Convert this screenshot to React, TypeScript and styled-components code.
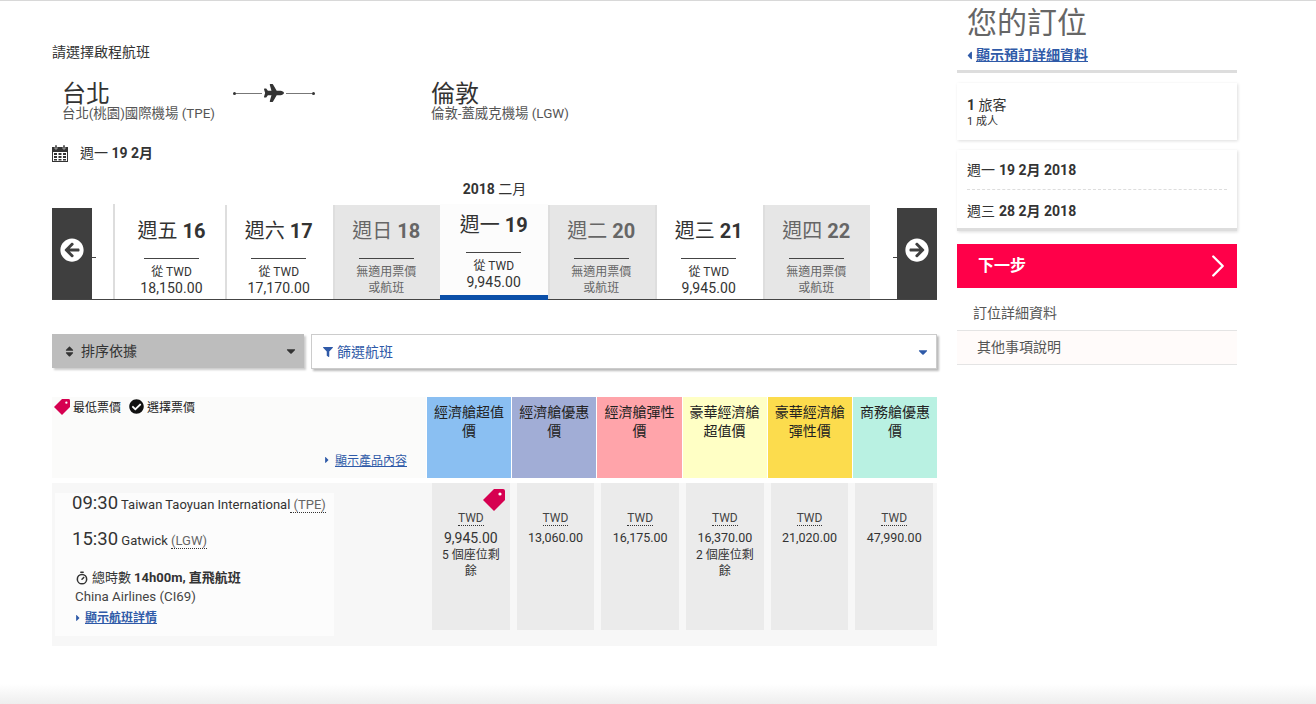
import styled, { createGlobalStyle } from "styled-components";
import { FaArrowCircleLeft, FaArrowCircleRight, FaCaretDown, FaCaretLeft, FaCaretRight, FaCheckCircle, FaFilter, FaPlane, FaSort } from "react-icons/fa";
import { Timer, ChevronRight } from "lucide-react";

const FONT = `Roboto, "Noto Sans CJK TC", sans-serif`;
const BLUE = "#2f5aa8";

const days = [
    { day: "週五", num: 16, price: "18,150.00" },
    { day: "週六", num: 17, price: "17,170.00" },
    { day: "週日", num: 18 },
    { day: "週一", num: 19, price: "9,945.00", active: true },
    { day: "週二", num: 20 },
    { day: "週三", num: 21, price: "9,945.00" },
    { day: "週四", num: 22 },
];

const fares = [
    { name: "經濟艙超值價", color: "#8abff2" },
    { name: "經濟艙優惠價", color: "#a1add6" },
    { name: "經濟艙彈性價", color: "#ffa4aa" },
    { name: "豪華經濟艙超值價", color: "#ffffc5" },
    { name: "豪華經濟艙彈性價", color: "#fcdc4d" },
    { name: "商務艙優惠價", color: "#b9f1e2" },
];

const prices = [
    { price: "9,945.00", seats: "5 個座位剩餘", lowest: true },
    { price: "13,060.00" },
    { price: "16,175.00" },
    { price: "16,370.00", seats: "2 個座位剩餘" },
    { price: "21,020.00" },
    { price: "47,990.00" },
];

const TagIcon = ({ size }: { size: number }) => (
    <svg width={size} height={size} viewBox="0 0 22 22">
        <path d="M0 11 11 0h9a2 2 0 0 1 2 2v9L11 22Z" fill="#d60050" />
        <circle cx="17" cy="5" r="1.6" fill="#fff" />
    </svg>
);

const CalendarIcon = () => (
    <svg width="16" height="18" viewBox="0 0 16 18" fill="#333">
        <path d="M0 3h16v15H0Zm1 5v9h14V8Z" fillRule="evenodd" />
        <path d="M3 1h2v4H3zM11 1h2v4h-2z" stroke="#fff" strokeWidth=".5" />
        <path d="M2 9h3v2H2zM6.5 9h3v2h-3zM11 9h3v2h-3zM2 12h3v2H2zM6.5 12h3v2h-3zM11 12h3v2h-3zM2 15h3v1.5H2zM6.5 15h3v1.5h-3zM11 15h3v1.5h-3z" />
    </svg>
);

export default function App() {
    return (
        <>
            <GlobalStyle />
            <Page>
                <MainColumn>
                    <Prompt>請選擇啟程航班</Prompt>
                    <Route>
                        <Place>
                            <City>台北</City>
                            <Airport>台北(桃園)國際機場 (TPE)</Airport>
                        </Place>
                        <PlaneLine>
                            <Dot /><Line /><FaPlane size={20} /><Line /><Dot />
                        </PlaneLine>
                        <Place>
                            <City>倫敦</City>
                            <Airport>倫敦-蓋威克機場 (LGW)</Airport>
                        </Place>
                    </Route>
                    <DateRow>
                        <CalendarIcon />
                        <span>週一 <b>19 2月</b></span>
                    </DateRow>
                    <MonthLabel><b>2018</b> 二月</MonthLabel>

                    <Strip>
                        <ArrowBox><FaArrowCircleLeft size={24} /></ArrowBox>
                        <EdgeCell $side="left"><EdgeDash /></EdgeCell>
                        {days.map(d => (
                            <DayCell key={d.num} $active={d.active} $empty={!d.price}>
                                <DayTitle>{d.day} <b>{d.num}</b></DayTitle>
                                <DayRule />
                                {d.price ? (
                                    <>
                                        <DayFrom>從 TWD</DayFrom>
                                        <DayPrice>{d.price}</DayPrice>
                                    </>
                                ) : (
                                    <DayNone>無適用票價<br />或航班</DayNone>
                                )}
                            </DayCell>
                        ))}
                        <EdgeCell $side="right"><EdgeDash /></EdgeCell>
                        <ArrowBox><FaArrowCircleRight size={24} /></ArrowBox>
                    </Strip>

                    <Controls>
                        <SortSelect>
                            <FaSort size={13} />
                            <SelectLabel>排序依據</SelectLabel>
                            <SelectCaret><FaCaretDown size={14} /></SelectCaret>
                        </SortSelect>
                        <FilterSelect>
                            <FaFilter size={10} />
                            <SelectLabel>篩選航班</SelectLabel>
                            <SelectCaret><FaCaretDown size={14} /></SelectCaret>
                        </FilterSelect>
                    </Controls>

                    <FareHeader>
                        <Legend>
                            <LegendRow>
                                <TagIcon size={16} />
                                <span>最低票價</span>
                                <FaCheckCircle size={15} color="#111" />
                                <span>選擇票價</span>
                            </LegendRow>
                            <ProductLink><FaCaretRight size={10} /><a>顯示產品內容</a></ProductLink>
                        </Legend>
                        {fares.map(f => (
                            <FareName key={f.name} $color={f.color}>{f.name}</FareName>
                        ))}
                    </FareHeader>

                    <FlightRow>
                        <FlightCard>
                            <TimeRow><Time>09:30</Time> Taiwan Taoyuan International<Abbr> (TPE)</Abbr></TimeRow>
                            <TimeRow><Time>15:30</Time> Gatwick <Abbr>(LGW)</Abbr></TimeRow>
                            <Duration><Timer size={14} strokeWidth={2.6} />總時數 <b>14h00m, 直飛航班</b></Duration>
                            <Carrier>China Airlines (CI69)</Carrier>
                            <DetailLink><FaCaretRight size={10} /><a>顯示航班詳情</a></DetailLink>
                        </FlightCard>
                        <PriceCells>
                            {prices.map(p => (
                                <PriceCell key={p.price}>
                                    {p.lowest && <CornerTag><TagIcon size={22} /></CornerTag>}
                                    <Currency>TWD</Currency>
                                    <PriceValue $big={p.lowest}>{p.price}</PriceValue>
                                    {p.seats && <Seats>{p.seats}</Seats>}
                                </PriceCell>
                            ))}
                        </PriceCells>
                    </FlightRow>
                </MainColumn>

                <SideColumn>
                    <SideTitle>您的訂位</SideTitle>
                    <SideLink><FaCaretLeft size={13} /><a>顯示預訂詳細資料</a></SideLink>
                    <SideCard>
                        <Travelers><b>1</b> 旅客</Travelers>
                        <Adults>1 成人</Adults>
                    </SideCard>
                    <DatesCard>
                        <TripDate>週一 <b>19 2月 2018</b></TripDate>
                        <TripDate>週三 <b>28 2月 2018</b></TripDate>
                    </DatesCard>
                    <NextButton>
                        <NextLabel>下一步</NextLabel>
                        <ChevronRight size={38} strokeWidth={1.5} />
                    </NextButton>
                    <SideMenuItem>訂位詳細資料</SideMenuItem>
                    <SideMenuItem $alt>其他事項說明</SideMenuItem>
                </SideColumn>
            </Page>
            <BottomFade />
        </>
    );
}

const GlobalStyle = createGlobalStyle`
    html, body {
        margin: 0;
        height: 100%;
        overflow: hidden;
        background: #fff;
    }
    body {
        font-family: ${FONT};
        color: #333;
    }
    a {
        color: ${BLUE};
        text-decoration: underline;
    }
`;

const Page = styled.div`
    display: flex;
    gap: 20px;
    height: 684px;
    padding-left: 52px;
    border-top: 1px solid #d8d8d8;
    box-sizing: border-box;
`;

const BottomFade = styled.div`
    height: 20px;
    background: linear-gradient(#fff, #eee);
`;

const MainColumn = styled.div`
    width: 885px;
    padding-top: 43px;
`;

const Prompt = styled.div`
    font-size: 14px;
    line-height: 16px;
`;

const Route = styled.div`
    display: flex;
    margin-top: 20px;
    padding-left: 10px;
`;

const Place = styled.div`
    width: 170px;
`;

const City = styled.div`
    font-size: 24px;
    line-height: 28px;
    color: #333;
`;

const Airport = styled.div`
    font-size: 13.4px;
    line-height: 14px;
    margin-top: -1px;
    color: #555;
    white-space: nowrap;
`;

const PlaneLine = styled.div`
    display: flex;
    align-items: center;
    width: 82px;
    height: 20px;
    margin: 3px 116px 0 1px;
    color: #333;
    svg {
        margin: 0 2px;
        flex: none;
    }
`;

const Dot = styled.i`
    width: 3px;
    height: 3px;
    border-radius: 50%;
    background: #333;
    flex: none;
`;

const Line = styled.i`
    flex: 1;
    height: 1px;
    background: #777;
`;

const DateRow = styled.div`
    display: flex;
    align-items: center;
    gap: 12px;
    margin-top: 23px;
    font-size: 14px;
    line-height: 18px;
`;

const MonthLabel = styled.div`
    margin-top: 19px;
    text-align: center;
    font-size: 14px;
    line-height: 16px;
`;

const Strip = styled.div`
    display: flex;
    height: 96px;
    margin-top: 7px;
    border-bottom: 1px solid #444;
    box-sizing: border-box;
    align-items: flex-end;
`;

const ArrowBox = styled.div`
    flex: none;
    width: 40px;
    height: 91px;
    background: #3f3f3f;
    color: #fff;
    display: flex;
    justify-content: center;
    padding-top: 30px;
    box-sizing: border-box;
`;

const EdgeCell = styled.div<{ $side: "left" | "right" }>`
    flex: none;
    width: ${p => (p.$side === "left" ? "23px" : "27px")};
    height: 100%;
    display: flex;
    padding-top: 53px;
    box-sizing: border-box;
    justify-content: ${p => (p.$side === "left" ? "flex-start" : "flex-end")};
    border-right: ${p => (p.$side === "left" ? "2px solid #ddd" : "none")};
`;

const EdgeDash = styled.i`
    width: 4px;
    height: 1px;
    background: #444;
`;

const DayCell = styled.div<{ $active?: boolean; $empty?: boolean }>`
    flex: 1 1 0;
    height: ${p => (p.$active ? "96px" : "94px")};
    box-sizing: border-box;
    text-align: center;
    background: ${p => (p.$active ? "#fcfcfc" : p.$empty ? "#e6e6e6" : "#fff")};
    color: ${p => (p.$empty ? "#666" : "#333")};
    box-shadow: ${p => (p.$active ? "none" : "inset 2px 0 0 #dedede")};
    border-bottom: ${p => (p.$active ? "5px solid #0b4fa8" : "none")};
    margin-bottom: ${p => (p.$active ? "-1px" : "0")};
    padding-top: ${p => (p.$active ? "8px" : "13px")};
    &:nth-child(3) {
        flex: 0 0 110px;
        padding-left: 3px;
        box-shadow: none;
    }
`;

const DayTitle = styled.div`
    font-size: 20px;
    line-height: 26px;
    b {
        font-weight: 700;
    }
`;

const DayRule = styled.div`
    width: 55px;
    height: 1px;
    background: #444;
    margin: 14px auto 5px;
`;

const DayFrom = styled.div`
    font-size: 12px;
    line-height: 16px;
`;

const DayPrice = styled.div`
    font-size: 14px;
    line-height: 17px;
    letter-spacing: 0.1px;
`;

const DayNone = styled.div`
    font-size: 12px;
    line-height: 16px;
`;

const Controls = styled.div`
    display: flex;
    gap: 7px;
    margin-top: 34px;
`;

const SortSelect = styled.div`
    position: relative;
    width: 252px;
    height: 34px;
    display: flex;
    align-items: center;
    gap: 5px;
    padding-left: 11px;
    box-sizing: border-box;
    background: #bdbdbd;
    font-size: 14px;
    color: #333;
    box-shadow: 2px 2px 2px #ccc;
`;

const FilterSelect = styled.div`
    position: relative;
    flex: 1;
    height: 35px;
    display: flex;
    align-items: center;
    gap: 4px;
    padding-left: 11px;
    box-sizing: border-box;
    background: #fff;
    border: 1px solid #ccc;
    font-size: 14px;
    color: ${BLUE};
    box-shadow: 2px 2px 2px #bbb;
`;

const SelectLabel = styled.span`
    margin-bottom: 2px;
`;

const SelectCaret = styled.span`
    margin-left: auto;
    margin-right: 6px;
    display: flex;
`;

const FareHeader = styled.div`
    display: flex;
    gap: 1px;
    height: 81px;
    margin-top: 28px;
`;

const Legend = styled.div`
    flex: none;
    width: 374px;
    background: #fbfbfa;
    display: flex;
    flex-direction: column;
    justify-content: space-between;
    box-sizing: border-box;
    padding: 1px 19px 10px 2px;
`;

const LegendRow = styled.div`
    display: flex;
    align-items: center;
    gap: 3px;
    font-size: 12px;
    color: #222;
    span {
        margin-right: 5px;
    }
`;

const ProductLink = styled.div`
    display: flex;
    align-items: center;
    justify-content: flex-end;
    gap: 3px;
    font-size: 12px;
    color: ${BLUE};
`;

const FareName = styled.div<{ $color: string }>`
    flex: 1 1 0;
    background: ${p => p.$color};
    font-size: 14px;
    line-height: 19px;
    padding: 6px 4px 0;
    text-align: center;
    color: #222;
`;

const FlightRow = styled.div`
    display: flex;
    height: 163px;
    margin-top: 5px;
    background: #f7f7f7;
`;

const FlightCard = styled.div`
    flex: none;
    width: 279px;
    height: 143px;
    margin: 10px 0 0 3px;
    padding-left: 17px;
    box-sizing: border-box;
    background: #fcfcfc;
`;

const TimeRow = styled.div`
    font-size: 13px;
    line-height: 20px;
    height: 36px;
    color: #333;
    white-space: nowrap;
`;

const Time = styled.span`
    font-size: 18.5px;
`;

const Abbr = styled.span`
    color: #666;
    border-bottom: 1px dotted #333;
`;

const Duration = styled.div`
    display: flex;
    align-items: center;
    gap: 3px;
    margin: 4px 0 0 3px;
    font-size: 13px;
    line-height: 18px;
`;

const Carrier = styled.div`
    margin: 1px 0 0 3px;
    font-size: 13.3px;
    line-height: 18px;
    color: #444;
`;

const DetailLink = styled.div`
    display: flex;
    align-items: center;
    gap: 2px;
    margin: 3px 0 0 1px;
    font-size: 12px;
    line-height: 18px;
    font-weight: 700;
    color: ${BLUE};
`;

const PriceCells = styled.div`
    flex: 1;
    display: flex;
    gap: 7px;
    padding: 0 4px 0 98px;
`;

const PriceCell = styled.div`
    position: relative;
    flex: 1 1 0;
    height: 147px;
    background: #ebebeb;
    text-align: center;
    padding: 24px 6px 0;
    box-sizing: border-box;
`;

const CornerTag = styled.div`
    position: absolute;
    top: 6px;
    right: 5px;
    line-height: 0;
`;

const Currency = styled.span`
    display: inline-block;
    font-size: 12px;
    line-height: 14px;
    color: #444;
    border-bottom: 1px dotted #333;
`;

const PriceValue = styled.div<{ $big?: boolean }>`
    font-size: ${p => (p.$big ? "14px" : "12.5px")};
    line-height: 18px;
    margin-top: 3px;
    color: #333;
`;

const Seats = styled.div`
    font-size: 12px;
    line-height: 16px;
    color: #333;
`;

const SideColumn = styled.div`
    width: 280px;
`;

const SideTitle = styled.div`
    font-size: 30px;
    line-height: 44px;
    padding-left: 10px;
    color: #666;
`;

const SideLink = styled.div`
    display: flex;
    align-items: center;
    padding: 2px 0 6px 6px;
    font-size: 14px;
    line-height: 17px;
    font-weight: 700;
    color: ${BLUE};
    border-bottom: 3px solid #ddd;
`;

const SideCard = styled.div`
    height: 57px;
    margin-top: 10px;
    padding: 14px 0 0 10px;
    box-sizing: border-box;
    box-shadow: 1px 1px 3px #ddd;
`;

const Travelers = styled.div`
    font-size: 14px;
    line-height: 16px;
`;

const Adults = styled.div`
    margin-top: 2px;
    font-size: 11px;
    line-height: 13px;
`;

const DatesCard = styled.div`
    height: 81px;
    margin-top: 10px;
    box-sizing: border-box;
    padding: 0 10px;
    border-bottom: 3px solid #ddd;
    box-shadow: 1px 1px 3px #ddd;
`;

const TripDate = styled.div`
    height: 40px;
    box-sizing: border-box;
    display: flex;
    align-items: center;
    gap: 4px;
    font-size: 14px;
    &:first-child {
        padding-bottom: 2px;
        border-bottom: 1px dashed #ddd;
    }
`;

const NextButton = styled.div`
    display: flex;
    align-items: center;
    justify-content: space-between;
    height: 44px;
    margin: 13px 0 9px;
    padding-left: 21px;
    background: #ff0049;
    color: #fff;
    font-size: 16px;
    font-weight: 700;
`;

const NextLabel = styled.span`
    margin-bottom: 4px;
`;

const SideMenuItem = styled.div<{ $alt?: boolean }>`
    height: 34px;
    line-height: 33px;
    box-sizing: border-box;
    padding-left: ${p => (p.$alt ? "20px" : "16px")};
    font-size: 14px;
    color: #555;
    background: ${p => (p.$alt ? "#fffbfa" : "#fff")};
    border-bottom: 1px solid #e4e4e4;
`;
